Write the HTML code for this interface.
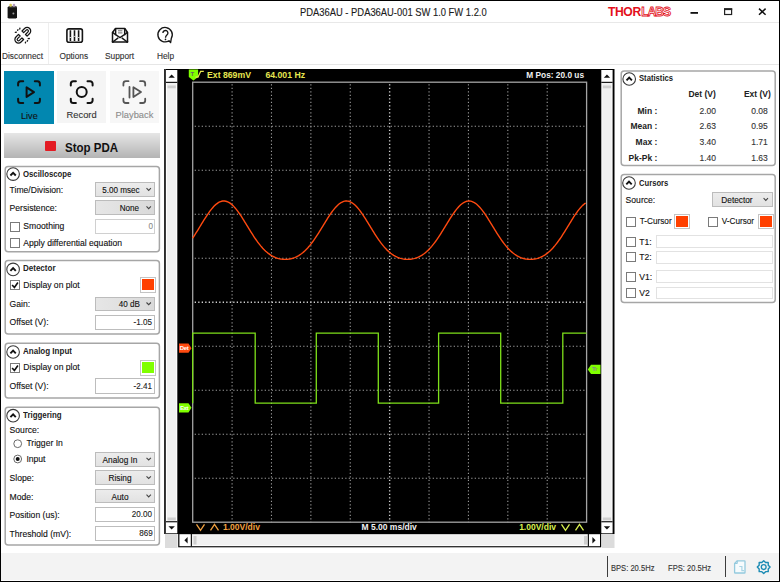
<!DOCTYPE html>
<html><head><meta charset="utf-8">
<style>
*{box-sizing:border-box;margin:0;padding:0}
html,body{width:780px;height:582px;overflow:hidden;background:#fff}
body{position:relative;font-family:"Liberation Sans",sans-serif;color:#222}
.a{position:absolute}
.t{position:absolute;white-space:nowrap;line-height:1}
.t.r{-webkit-text-stroke:0.12px currentColor}
svg{position:absolute;left:0;top:0;overflow:visible}
</style></head><body>
<svg width="780" height="582"><rect x="164" y="69" width="450.5" height="465" fill="#000"/><rect x="166" y="70" width="11.3" height="463.3" fill="#fff"/><rect x="167" y="83" width="9.3" height="438" fill="#f1f1f1"/><rect x="167.5" y="85.5" width="8.3" height="2.8" fill="#cfcfcf"/><rect x="167.5" y="517.5" width="8.3" height="2.8" fill="#cfcfcf"/><rect x="166" y="81.8" width="11.3" height="1.1" fill="#000"/><rect x="166" y="521.2" width="11.3" height="1.1" fill="#000"/><path d="M168.45000000000002 77.8h6.4l-3.2-3.2z" fill="#111"/><path d="M168.45000000000002 526.2h6.4l-3.2 3.2z" fill="#111"/><rect x="601.3" y="70" width="11.3" height="463.3" fill="#fff"/><rect x="602.3" y="83" width="9.3" height="438" fill="#f1f1f1"/><rect x="602.8" y="85.5" width="8.3" height="2.8" fill="#cfcfcf"/><rect x="602.8" y="517.5" width="8.3" height="2.8" fill="#cfcfcf"/><rect x="601.3" y="81.8" width="11.3" height="1.1" fill="#000"/><rect x="601.3" y="521.2" width="11.3" height="1.1" fill="#000"/><path d="M603.7499999999999 77.8h6.4l-3.2-3.2z" fill="#111"/><path d="M603.7499999999999 526.2h6.4l-3.2 3.2z" fill="#111"/><rect x="164.4" y="69" width="1.4" height="465" fill="#4a4a4a"/><rect x="165" y="534" width="12.5" height="14" fill="#dcdcdc"/><rect x="602" y="534" width="12.5" height="14" fill="#dcdcdc"/><rect x="178.2" y="533" width="423" height="14.3" fill="#000"/><rect x="179.4" y="534.2" width="420.6" height="12" fill="#fff"/><rect x="192" y="535.2" width="396" height="10" fill="#f1f1f1"/><rect x="193.5" y="536" width="3" height="8.5" fill="#cfcfcf"/><rect x="584" y="536" width="3" height="8.5" fill="#cfcfcf"/><rect x="190.8" y="534" width="1.1" height="12.3" fill="#000"/><rect x="587.8" y="534" width="1.1" height="12.3" fill="#000"/><path d="M187.6 537v6.4l-3.2-3.2z" fill="#111"/><path d="M592.4 537v6.4l3.2-3.2z" fill="#111"/><line x1="232.09" y1="84.2" x2="232.09" y2="522.2" stroke="#9a9a9a" stroke-width="1.1" stroke-dasharray="1.3 2.2"/><line x1="271.48" y1="84.2" x2="271.48" y2="522.2" stroke="#9a9a9a" stroke-width="1.1" stroke-dasharray="1.3 2.2"/><line x1="310.87" y1="84.2" x2="310.87" y2="522.2" stroke="#9a9a9a" stroke-width="1.1" stroke-dasharray="1.3 2.2"/><line x1="350.26" y1="84.2" x2="350.26" y2="522.2" stroke="#9a9a9a" stroke-width="1.1" stroke-dasharray="1.3 2.2"/><line x1="389.65" y1="84.2" x2="389.65" y2="522.2" stroke="#d0d0d0" stroke-width="1.4" stroke-dasharray="1.3 2.2"/><line x1="429.04" y1="84.2" x2="429.04" y2="522.2" stroke="#9a9a9a" stroke-width="1.1" stroke-dasharray="1.3 2.2"/><line x1="468.43" y1="84.2" x2="468.43" y2="522.2" stroke="#9a9a9a" stroke-width="1.1" stroke-dasharray="1.3 2.2"/><line x1="507.82" y1="84.2" x2="507.82" y2="522.2" stroke="#9a9a9a" stroke-width="1.1" stroke-dasharray="1.3 2.2"/><line x1="547.21" y1="84.2" x2="547.21" y2="522.2" stroke="#9a9a9a" stroke-width="1.1" stroke-dasharray="1.3 2.2"/><line x1="194.7" y1="126.20" x2="586.6" y2="126.20" stroke="#9a9a9a" stroke-width="1.1" stroke-dasharray="1.3 2.2"/><line x1="194.7" y1="170.20" x2="586.6" y2="170.20" stroke="#9a9a9a" stroke-width="1.1" stroke-dasharray="1.3 2.2"/><line x1="194.7" y1="214.20" x2="586.6" y2="214.20" stroke="#9a9a9a" stroke-width="1.1" stroke-dasharray="1.3 2.2"/><line x1="194.7" y1="258.20" x2="586.6" y2="258.20" stroke="#9a9a9a" stroke-width="1.1" stroke-dasharray="1.3 2.2"/><line x1="194.7" y1="302.20" x2="586.6" y2="302.20" stroke="#d0d0d0" stroke-width="1.4" stroke-dasharray="1.3 2.2"/><line x1="194.7" y1="346.20" x2="586.6" y2="346.20" stroke="#9a9a9a" stroke-width="1.1" stroke-dasharray="1.3 2.2"/><line x1="194.7" y1="390.20" x2="586.6" y2="390.20" stroke="#9a9a9a" stroke-width="1.1" stroke-dasharray="1.3 2.2"/><line x1="194.7" y1="434.20" x2="586.6" y2="434.20" stroke="#9a9a9a" stroke-width="1.1" stroke-dasharray="1.3 2.2"/><line x1="194.7" y1="478.20" x2="586.6" y2="478.20" stroke="#9a9a9a" stroke-width="1.1" stroke-dasharray="1.3 2.2"/><rect x="192.7" y="82.2" width="393.90000000000003" height="440.00000000000006" fill="none" stroke="#a4a4a4" stroke-width="1.3"/><polyline points="192.7,238.07 193.7,236.57 194.7,235.04 195.7,233.47 196.7,231.88 197.7,230.27 198.7,228.64 199.7,227.00 200.7,225.36 201.7,223.71 202.7,222.08 203.7,220.46 204.7,218.87 205.7,217.30 206.7,215.76 207.7,214.27 208.7,212.83 209.7,211.45 210.7,210.12 211.7,208.87 212.7,207.69 213.7,206.59 214.7,205.57 215.7,204.65 216.7,203.82 217.7,203.10 218.7,202.47 219.7,201.96 220.7,201.55 221.7,201.25 222.7,201.07 223.7,201.00 224.7,201.05 225.7,201.21 226.7,201.48 227.7,201.87 228.7,202.36 229.7,202.96 230.7,203.67 231.7,204.48 232.7,205.38 233.7,206.38 234.7,207.46 235.7,208.63 236.7,209.87 237.7,211.18 238.7,212.55 239.7,213.98 240.7,215.46 241.7,216.99 242.7,218.55 243.7,220.14 244.7,221.76 245.7,223.39 246.7,225.03 247.7,226.67 248.7,228.31 249.7,229.94 250.7,231.56 251.7,233.16 252.7,234.73 253.7,236.27 254.7,237.77 255.7,239.24 256.7,240.66 257.7,242.04 258.7,243.37 259.7,244.65 260.7,245.88 261.7,247.05 262.7,248.17 263.7,249.23 264.7,250.23 265.7,251.18 266.7,252.07 267.7,252.90 268.7,253.68 269.7,254.40 270.7,255.06 271.7,255.68 272.7,256.24 273.7,256.75 274.7,257.21 275.7,257.62 276.7,257.99 277.7,258.31 278.7,258.59 279.7,258.83 280.7,259.02 281.7,259.17 282.7,259.29 283.7,259.36 284.7,259.40 285.7,259.39 286.7,259.35 287.7,259.27 288.7,259.15 289.7,258.99 290.7,258.78 291.7,258.54 292.7,258.25 293.7,257.92 294.7,257.54 295.7,257.12 296.7,256.65 297.7,256.13 298.7,255.56 299.7,254.93 300.7,254.26 301.7,253.52 302.7,252.74 303.7,251.89 304.7,250.99 305.7,250.04 306.7,249.02 307.7,247.95 308.7,246.82 309.7,245.64 310.7,244.40 311.7,243.11 312.7,241.77 313.7,240.38 314.7,238.95 315.7,237.47 316.7,235.96 317.7,234.42 318.7,232.84 319.7,231.24 320.7,229.62 321.7,227.98 322.7,226.34 323.7,224.70 324.7,223.06 325.7,221.43 326.7,219.82 327.7,218.23 328.7,216.68 329.7,215.16 330.7,213.69 331.7,212.27 332.7,210.91 333.7,209.61 334.7,208.39 335.7,207.24 336.7,206.17 337.7,205.19 338.7,204.31 339.7,203.52 340.7,202.83 341.7,202.25 342.7,201.78 343.7,201.42 344.7,201.17 345.7,201.03 346.7,201.01 347.7,201.10 348.7,201.30 349.7,201.62 350.7,202.05 351.7,202.59 352.7,203.23 353.7,203.98 354.7,204.83 355.7,205.77 356.7,206.80 357.7,207.92 358.7,209.11 359.7,210.38 360.7,211.72 361.7,213.12 362.7,214.57 363.7,216.07 364.7,217.61 365.7,219.18 366.7,220.78 367.7,222.41 368.7,224.04 369.7,225.68 370.7,227.33 371.7,228.97 372.7,230.59 373.7,232.20 374.7,233.79 375.7,235.35 376.7,236.87 377.7,238.36 378.7,239.81 379.7,241.22 380.7,242.58 381.7,243.89 382.7,245.15 383.7,246.36 384.7,247.51 385.7,248.60 386.7,249.64 387.7,250.62 388.7,251.54 389.7,252.41 390.7,253.22 391.7,253.97 392.7,254.67 393.7,255.31 394.7,255.91 395.7,256.45 396.7,256.94 397.7,257.38 398.7,257.77 399.7,258.12 400.7,258.43 401.7,258.69 402.7,258.91 403.7,259.09 404.7,259.22 405.7,259.32 406.7,259.38 407.7,259.40 408.7,259.38 409.7,259.32 410.7,259.22 411.7,259.09 412.7,258.91 413.7,258.69 414.7,258.43 415.7,258.12 416.7,257.77 417.7,257.38 418.7,256.94 419.7,256.45 420.7,255.91 421.7,255.31 422.7,254.67 423.7,253.97 424.7,253.22 425.7,252.41 426.7,251.54 427.7,250.62 428.7,249.64 429.7,248.60 430.7,247.51 431.7,246.36 432.7,245.15 433.7,243.89 434.7,242.58 435.7,241.22 436.7,239.81 437.7,238.36 438.7,236.87 439.7,235.35 440.7,233.79 441.7,232.20 442.7,230.59 443.7,228.97 444.7,227.33 445.7,225.68 446.7,224.04 447.7,222.41 448.7,220.78 449.7,219.18 450.7,217.61 451.7,216.07 452.7,214.57 453.7,213.12 454.7,211.72 455.7,210.38 456.7,209.11 457.7,207.92 458.7,206.80 459.7,205.77 460.7,204.83 461.7,203.98 462.7,203.23 463.7,202.59 464.7,202.05 465.7,201.62 466.7,201.30 467.7,201.10 468.7,201.01 469.7,201.03 470.7,201.17 471.7,201.42 472.7,201.78 473.7,202.25 474.7,202.83 475.7,203.52 476.7,204.31 477.7,205.19 478.7,206.17 479.7,207.24 480.7,208.39 481.7,209.61 482.7,210.91 483.7,212.27 484.7,213.69 485.7,215.16 486.7,216.68 487.7,218.23 488.7,219.82 489.7,221.43 490.7,223.06 491.7,224.70 492.7,226.34 493.7,227.98 494.7,229.62 495.7,231.24 496.7,232.84 497.7,234.42 498.7,235.96 499.7,237.47 500.7,238.95 501.7,240.38 502.7,241.77 503.7,243.11 504.7,244.40 505.7,245.64 506.7,246.82 507.7,247.95 508.7,249.02 509.7,250.04 510.7,250.99 511.7,251.89 512.7,252.74 513.7,253.52 514.7,254.26 515.7,254.93 516.7,255.56 517.7,256.13 518.7,256.65 519.7,257.12 520.7,257.54 521.7,257.92 522.7,258.25 523.7,258.54 524.7,258.78 525.7,258.99 526.7,259.15 527.7,259.27 528.7,259.35 529.7,259.39 530.7,259.40 531.7,259.36 532.7,259.29 533.7,259.17 534.7,259.02 535.7,258.83 536.7,258.59 537.7,258.31 538.7,257.99 539.7,257.62 540.7,257.21 541.7,256.75 542.7,256.24 543.7,255.68 544.7,255.06 545.7,254.40 546.7,253.68 547.7,252.90 548.7,252.07 549.7,251.18 550.7,250.23 551.7,249.23 552.7,248.17 553.7,247.05 554.7,245.88 555.7,244.65 556.7,243.37 557.7,242.04 558.7,240.66 559.7,239.24 560.7,237.77 561.7,236.27 562.7,234.73 563.7,233.16 564.7,231.56 565.7,229.94 566.7,228.31 567.7,226.67 568.7,225.03 569.7,223.39 570.7,221.76 571.7,220.14 572.7,218.55 573.7,216.99 574.7,215.46 575.7,213.98 576.7,212.55 577.7,211.18 578.7,209.87 579.7,208.63 580.7,207.46 581.7,206.38 582.7,205.38 583.7,204.48 584.7,203.67 585.7,202.96" fill="none" stroke="#ff4a10" stroke-width="1.4"/><path d="M192.7 403.2 V333.1 H255.2 V403.2 H316.3 V333.1 H378.3 V403.2 H438.6 V333.1 H500.7 V403.2 H562.8 V333.1 H586.6" fill="none" stroke="#7ee01a" stroke-width="1.3"/><path d="M179 343.6h9.5l3 4.6-3 4.6h-9.5z" fill="#ff4a10"/><path d="M179 403.2h9.5l3 4.6-3 4.6h-9.5z" fill="#80ff00"/><path d="M600.5 364.8h-9.5l-3.2 4.6 3.2 4.6h9.5z" fill="#80ff00"/><path d="M188.8 69.5h9.3v7.5l-4.65 3.5-4.65-3.5z" fill="#80ff00"/><path d="M195.5 77.2h2.5l2.6-5.8h3.2" fill="none" stroke="#e8e850" stroke-width="1.2"/><path d="M196.5 524.3l4 6 4-6M210.5 530.3l4-6 4 6" fill="none" stroke="#f0a040" stroke-width="1.3"/><path d="M561.5 524.3l4 6 4-6M575.5 530.3l4-6 4 6" fill="none" stroke="#d8f050" stroke-width="1.3"/></svg>
<div class="a" style="left:1px;top:22px;width:778px;height:1px;background:#e8e8e8"></div>
<div class="t r" style="left:300.00px;top:7.57px;font-size:10.2px;font-weight:400;color:#1a1a1a;transform:scaleX(0.921);transform-origin:left top;">PDA36AU - PDA36AU-001 SW 1.0 FW 1.2.0</div>
<div class="t" style="left:608.00px;top:5.97px;font-size:12.2px;font-weight:700;color:#e3101c;letter-spacing:-0.45px;">THOR</div>
<div class="t" style="left:641.20px;top:5.97px;font-size:12.2px;font-weight:700;color:#fff;letter-spacing:-1.1px;-webkit-text-stroke:0.8px #e3101c;">LABS</div>
<div class="a" style="left:1px;top:64px;width:778px;height:1px;background:#e6e6e6"></div>
<div class="a" style="left:48px;top:23px;width:1px;height:41px;background:#eeeeee"></div>
<div class="t r" style="left:2.00px;top:51.97px;font-size:8.3px;font-weight:400;color:#333;">Disconnect</div>
<div class="t r" style="left:59.50px;top:51.97px;font-size:8.3px;font-weight:400;color:#333;">Options</div>
<div class="t r" style="left:105.00px;top:51.97px;font-size:8.3px;font-weight:400;color:#333;">Support</div>
<div class="t r" style="left:157.00px;top:51.97px;font-size:8.3px;font-weight:400;color:#333;">Help</div>
<div class="a" style="left:4px;top:71px;width:50px;height:53px;background:#0287b0"></div>
<div class="a" style="left:57px;top:71px;width:49px;height:52px;background:#f5f5f5"></div>
<div class="a" style="left:110px;top:71px;width:49px;height:52px;background:#f7f7f7"></div>
<div class="t r" style="left:20.80px;top:110.97px;font-size:9.6px;font-weight:400;color:#111;transform:scaleX(0.95);transform-origin:left top;">Live</div>
<div class="t r" style="left:66.60px;top:111.23px;font-size:9.3px;font-weight:400;color:#333;">Record</div>
<div class="t r" style="left:115.60px;top:111.23px;font-size:9.3px;font-weight:400;color:#8c8c8c;">Playback</div>
<div class="a" style="left:4px;top:133px;width:156px;height:25px;background:linear-gradient(#e6e6e6,#b4b4b4)"></div>
<div class="a" style="left:45px;top:141px;width:11px;height:10px;background:#e31b23;border-radius:1px"></div>
<div class="t" style="left:64.90px;top:141.94px;font-size:12px;font-weight:700;color:#111;transform:scaleX(0.96);transform-origin:left top;">Stop PDA</div>
<div class="t" style="left:22.50px;top:169.88px;font-size:9px;font-weight:700;color:#222;transform:scaleX(0.863);transform-origin:left top;">Oscilloscope</div>
<div class="t r" style="left:9.60px;top:186.02px;font-size:8.6px;font-weight:400;color:#111;">Time/Division:</div>
<div class="a" style="left:95.2px;top:182.4px;width:60.3px;height:14.400000000000006px;background:linear-gradient(#ececec,#e2e2e2);border:1px solid #bcbcbc"></div>
<div class="t r" style="right:640.50px;top:186.05px;font-size:8.8px;font-weight:400;color:#111;transform:scaleX(0.92);transform-origin:right top;">5.00 msec</div>
<div class="t r" style="left:9.60px;top:204.12px;font-size:8.6px;font-weight:400;color:#111;">Persistence:</div>
<div class="a" style="left:95.2px;top:200.4px;width:60.3px;height:14.799999999999983px;background:linear-gradient(90deg,#e6e6e6,#dadada);border:1px solid #bcbcbc"></div>
<div class="t r" style="right:640.50px;top:204.25px;font-size:8.8px;font-weight:400;color:#111;transform:scaleX(0.92);transform-origin:right top;">None</div>
<div class="t r" style="left:23.30px;top:221.72px;font-size:8.6px;font-weight:400;color:#111;">Smoothing</div>
<div class="a" style="left:95.2px;top:218.8px;width:60.3px;height:14.899999999999977px;background:#fff;border:1px solid #d0d0d0"></div>
<div class="t r" style="right:627.50px;top:221.90px;font-size:8.8px;font-weight:400;color:#8a8a8a;transform:scaleX(0.92);transform-origin:right top;">0</div>
<div class="t r" style="left:23.30px;top:238.62px;font-size:8.6px;font-weight:400;color:#111;">Apply differential equation</div>
<div class="t" style="left:22.50px;top:264.28px;font-size:9px;font-weight:700;color:#222;transform:scaleX(0.89);transform-origin:left top;">Detector</div>
<div class="t r" style="left:23.30px;top:280.72px;font-size:8.6px;font-weight:400;color:#111;">Display on plot</div>
<div class="a" style="left:139.8px;top:277px;width:15.8px;height:15.5px;background:#fff;border:1px solid #c4c4c4"></div>
<div class="a" style="left:141.8px;top:279.3px;width:11.8px;height:11px;background:#ff4000"></div>
<div class="t r" style="left:9.60px;top:299.82px;font-size:8.6px;font-weight:400;color:#111;">Gain:</div>
<div class="a" style="left:95.2px;top:296.5px;width:60.3px;height:14.800000000000011px;background:linear-gradient(90deg,#e6e6e6,#dadada);border:1px solid #bcbcbc"></div>
<div class="t r" style="right:640.50px;top:300.35px;font-size:8.8px;font-weight:400;color:#111;transform:scaleX(0.92);transform-origin:right top;">40 dB</div>
<div class="t r" style="left:9.60px;top:318.42px;font-size:8.6px;font-weight:400;color:#111;">Offset (V):</div>
<div class="a" style="left:95.2px;top:314.5px;width:60.3px;height:15.300000000000011px;background:#fff;border:1px solid #bdbdbd"></div>
<div class="t r" style="right:627.50px;top:317.80px;font-size:8.8px;font-weight:400;color:#222;transform:scaleX(0.92);transform-origin:right top;">-1.05</div>
<div class="t" style="left:22.50px;top:346.78px;font-size:9px;font-weight:700;color:#222;transform:scaleX(0.89);transform-origin:left top;">Analog Input</div>
<div class="t r" style="left:23.30px;top:363.22px;font-size:8.6px;font-weight:400;color:#111;">Display on plot</div>
<div class="a" style="left:139.8px;top:360px;width:15.8px;height:15.5px;background:#fff;border:1px solid #c4c4c4"></div>
<div class="a" style="left:141.8px;top:362.3px;width:11.8px;height:11px;background:#80ff00"></div>
<div class="t r" style="left:9.60px;top:382.32px;font-size:8.6px;font-weight:400;color:#111;">Offset (V):</div>
<div class="a" style="left:95.2px;top:378.4px;width:60.3px;height:15.200000000000045px;background:#fff;border:1px solid #bdbdbd"></div>
<div class="t r" style="right:627.50px;top:381.65px;font-size:8.8px;font-weight:400;color:#222;transform:scaleX(0.92);transform-origin:right top;">-2.41</div>
<div class="t" style="left:22.50px;top:410.58px;font-size:9px;font-weight:700;color:#222;transform:scaleX(0.875);transform-origin:left top;">Triggering</div>
<div class="t r" style="left:9.60px;top:425.52px;font-size:8.6px;font-weight:400;color:#111;">Source:</div>
<div class="t r" style="left:26.40px;top:438.92px;font-size:8.6px;font-weight:400;color:#111;">Trigger In</div>
<div class="t r" style="left:26.40px;top:454.52px;font-size:8.6px;font-weight:400;color:#111;">Input</div>
<div class="a" style="left:95.2px;top:451.8px;width:60.3px;height:14.800000000000011px;background:linear-gradient(#ececec,#e2e2e2);border:1px solid #bcbcbc"></div>
<div class="t r" style="left:20.35px;width:200px;text-align:center;top:455.65px;font-size:8.8px;font-weight:400;color:#111;transform:scaleX(0.94)">Analog In</div>
<div class="t r" style="left:9.60px;top:474.22px;font-size:8.6px;font-weight:400;color:#111;">Slope:</div>
<div class="a" style="left:95.2px;top:470.3px;width:60.3px;height:14.800000000000011px;background:linear-gradient(#ececec,#e2e2e2);border:1px solid #bcbcbc"></div>
<div class="t r" style="left:20.35px;width:200px;text-align:center;top:474.15px;font-size:8.8px;font-weight:400;color:#111;transform:scaleX(0.94)">Rising</div>
<div class="t r" style="left:9.60px;top:492.62px;font-size:8.6px;font-weight:400;color:#111;">Mode:</div>
<div class="a" style="left:95.2px;top:488.7px;width:60.3px;height:14.800000000000011px;background:linear-gradient(#ececec,#e2e2e2);border:1px solid #bcbcbc"></div>
<div class="t r" style="left:20.35px;width:200px;text-align:center;top:492.55px;font-size:8.8px;font-weight:400;color:#111;transform:scaleX(0.94)">Auto</div>
<div class="t r" style="left:9.60px;top:510.62px;font-size:8.6px;font-weight:400;color:#111;">Position (us):</div>
<div class="a" style="left:95.2px;top:507.3px;width:60.3px;height:14.800000000000011px;background:#fff;border:1px solid #bdbdbd"></div>
<div class="t r" style="right:627.50px;top:510.35px;font-size:8.8px;font-weight:400;color:#222;transform:scaleX(0.92);transform-origin:right top;">20.00</div>
<div class="t r" style="left:9.60px;top:529.62px;font-size:8.6px;font-weight:400;color:#111;">Threshold (mV):</div>
<div class="a" style="left:95.2px;top:525.9px;width:60.3px;height:14.800000000000068px;background:#fff;border:1px solid #bdbdbd"></div>
<div class="t r" style="right:627.50px;top:528.95px;font-size:8.8px;font-weight:400;color:#222;transform:scaleX(0.92);transform-origin:right top;">869</div>
<div class="t" style="left:638.80px;top:73.98px;font-size:9px;font-weight:700;color:#222;transform:scaleX(0.85);transform-origin:left top;">Statistics</div>
<div class="t" style="right:64.20px;top:89.80px;font-size:8.5px;font-weight:700;color:#222;">Det (V)</div>
<div class="t" style="right:9.20px;top:89.80px;font-size:8.5px;font-weight:700;color:#222;">Ext (V)</div>
<div class="t" style="right:122.70px;top:106.70px;font-size:8.5px;font-weight:700;color:#222;">Min :</div>
<div class="t r" style="right:64.00px;top:106.70px;font-size:8.5px;font-weight:400;color:#333;">2.00</div>
<div class="t r" style="right:12.30px;top:106.70px;font-size:8.5px;font-weight:400;color:#333;">0.08</div>
<div class="t" style="right:122.70px;top:122.40px;font-size:8.5px;font-weight:700;color:#222;">Mean :</div>
<div class="t r" style="right:64.00px;top:122.40px;font-size:8.5px;font-weight:400;color:#333;">2.63</div>
<div class="t r" style="right:12.30px;top:122.40px;font-size:8.5px;font-weight:400;color:#333;">0.95</div>
<div class="t" style="right:122.70px;top:138.10px;font-size:8.5px;font-weight:700;color:#222;">Max :</div>
<div class="t r" style="right:64.00px;top:138.10px;font-size:8.5px;font-weight:400;color:#333;">3.40</div>
<div class="t r" style="right:12.30px;top:138.10px;font-size:8.5px;font-weight:400;color:#333;">1.71</div>
<div class="t" style="right:122.70px;top:153.80px;font-size:8.5px;font-weight:700;color:#222;">Pk-Pk :</div>
<div class="t r" style="right:64.00px;top:153.80px;font-size:8.5px;font-weight:400;color:#333;">1.40</div>
<div class="t r" style="right:12.30px;top:153.80px;font-size:8.5px;font-weight:400;color:#333;">1.63</div>
<div class="t" style="left:638.70px;top:178.68px;font-size:9px;font-weight:700;color:#222;transform:scaleX(0.85);transform-origin:left top;">Cursors</div>
<div class="t r" style="left:625.60px;top:195.52px;font-size:8.6px;font-weight:400;color:#111;">Source:</div>
<div class="a" style="left:712.3px;top:192.2px;width:60.30000000000007px;height:14.800000000000011px;background:linear-gradient(#ececec,#e2e2e2);border:1px solid #bcbcbc"></div>
<div class="t r" style="left:637.00px;width:200px;text-align:center;top:196.05px;font-size:8.8px;font-weight:400;color:#111;transform:scaleX(0.94)">Detector</div>
<div class="t r" style="left:639.80px;top:217.86px;font-size:8.2px;font-weight:400;color:#111;">T-Cursor</div>
<div class="a" style="left:674.2px;top:213.5px;width:15.8px;height:15.5px;background:#fff;border:1px solid #c4c4c4"></div>
<div class="a" style="left:676.2px;top:215.8px;width:11.8px;height:11px;background:#ff4000"></div>
<div class="t r" style="left:721.80px;top:217.86px;font-size:8.2px;font-weight:400;color:#111;">V-Cursor</div>
<div class="a" style="left:757.8px;top:213.5px;width:15.8px;height:15.5px;background:#fff;border:1px solid #c4c4c4"></div>
<div class="a" style="left:759.8px;top:215.8px;width:11.8px;height:11px;background:#ff4000"></div>
<div class="t r" style="left:639.30px;top:238.12px;font-size:8.6px;font-weight:400;color:#111;">T1:</div>
<div class="a" style="left:655.6px;top:235.4px;width:117px;height:13.099999999999994px;background:#fff;border:1px solid #e2e2e2"></div>
<div class="t r" style="left:639.30px;top:253.42px;font-size:8.6px;font-weight:400;color:#111;">T2:</div>
<div class="a" style="left:655.6px;top:251.3px;width:117px;height:12.699999999999989px;background:#fff;border:1px solid #e2e2e2"></div>
<div class="t r" style="left:639.30px;top:272.62px;font-size:8.6px;font-weight:400;color:#111;">V1:</div>
<div class="a" style="left:655.6px;top:270.3px;width:117px;height:12.699999999999989px;background:#fff;border:1px solid #e2e2e2"></div>
<div class="t r" style="left:639.30px;top:288.92px;font-size:8.6px;font-weight:400;color:#111;">V2</div>
<div class="a" style="left:655.6px;top:287.2px;width:117px;height:11.699999999999989px;background:#fff;border:1px solid #e2e2e2"></div>
<div class="a" style="left:1px;top:553px;width:778px;height:27px;background:#f3f3f3"></div>
<div class="a" style="left:607px;top:556px;width:1px;height:21px;background:#3c3c3c"></div>
<div class="a" style="left:725px;top:556px;width:1px;height:21px;background:#3c3c3c"></div>
<div class="t r" style="left:611.30px;top:563.67px;font-size:8.9px;font-weight:400;color:#333;transform:scaleX(0.855);transform-origin:left top;">BPS: 20.5Hz</div>
<div class="t r" style="left:667.80px;top:563.67px;font-size:8.9px;font-weight:400;color:#333;transform:scaleX(0.855);transform-origin:left top;">FPS: 20.5Hz</div>
<svg width="780" height="582"><g><path d="M7.6 7.6l1.2-1.4h7.6l0.6 1.2v10.2l-1 0.8H8.6l-1-0.8z" fill="#151515"/><path d="M8.8 6.2h7.6l-0.8 1.2H9.4z" fill="#555"/><rect x="9.4" y="3.8" width="2.5" height="3" rx="1.1" fill="#d8c850"/><rect x="12.7" y="3.8" width="2.5" height="3" rx="1.1" fill="#b8a0c0"/><circle cx="13.4" cy="13.4" r="1" fill="#999"/></g><rect x="690.5" y="12" width="7.5" height="1.8" fill="#111"/><rect x="724.6" y="8.9" width="7" height="5.6" fill="none" stroke="#222" stroke-width="1.2"/><rect x="724" y="8.3" width="8.2" height="1.8" fill="#222"/><path d="M759 8.6l6.6 6.2M765.6 8.6l-6.6 6.2" stroke="#111" stroke-width="1.5"/><g fill="none" stroke="#151515" stroke-width="1.25" stroke-linejoin="round"><path transform="translate(26.4 31.7) rotate(45)" d="M-3.6 2.6V-1A3.6 3.6 0 0 1 3.6 -1V2.6H1.3V-1A1.3 1.3 0 0 0 -1.3 -1V2.6Z"/><path transform="translate(19.2 38.8) rotate(225)" d="M-3.6 2.6V-1A3.6 3.6 0 0 1 3.6 -1V2.6H1.3V-1A1.3 1.3 0 0 0 -1.3 -1V2.6Z"/></g><g stroke="#151515" stroke-width="1.3" stroke-linecap="round"><path d="M15.3 32.4l1.1-0.3M17.6 30.3l0.4-0.6M19.8 29l0.1-0.8M29.3 38.5l-1.1 0.2M27.6 40.6l-0.4 0.6M25.5 42.1l-0.1 0.7"/></g><g fill="none" stroke="#151515" stroke-width="1.6"><rect x="66.9" y="28.9" width="15.5" height="13.3" rx="2"/></g><g stroke="#151515" stroke-width="1.6"><path d="M70.4 30.2v10.8M74.5 30.2v10.8M78.6 30.2v10.8"/></g><g stroke="#c8c8c8" stroke-width="1"><path d="M69.2 37.5h2.4M73.3 36.4h2.4M77.4 37.5h2.4"/></g><g fill="none" stroke="#151515" stroke-width="1.5" stroke-linejoin="round"><path d="M112.5 42.1V32.5L115.5 28.4H124.8L127.5 32.5V42.1Z"/><path d="M115.6 28.4V35.2M124.7 28.4V35.2"/><path d="M112.5 32.5L120 37.6 127.5 32.5"/><path d="M112.7 42L118.2 37.8M127.3 42L121.8 37.8"/></g><g fill="#151515"><circle cx="112.8" cy="41.8" r="1.1"/><circle cx="127.2" cy="41.8" r="1.1"/><circle cx="112.8" cy="32.6" r="0.9"/><circle cx="127.2" cy="32.6" r="0.9"/></g><g stroke="#6a6a6a" stroke-width="1"><path d="M118 30.8h4.4M118 32.9h4.4"/></g><g fill="none" stroke="#151515" stroke-width="1.35" stroke-linejoin="round"><path d="M169 40.7A7.2 7.2 0 1 1 171.3 38.3L170.6 42.6Z"/><path d="M162.9 32.9a2.5 2.5 0 1 1 4.2 1.9c-0.9 0.8-1.6 1.4-1.6 2.9"/></g><circle cx="165.5" cy="39.4" r="0.85" fill="#151515"/><g fill="none" stroke="#111" stroke-width="2" stroke-linecap="round"><path d="M18.1 85.49999999999999v-1.8a2.5 2.5 0 0 1 2.5-2.5h2.6M34.8 81.19999999999999h2.6a2.5 2.5 0 0 1 2.5 2.5v1.8M39.9 98.7v1.8a2.5 2.5 0 0 1-2.5 2.5h-2.6M23.200000000000003 103.0h-2.6a2.5 2.5 0 0 1-2.5-2.5v-1.8"/></g><path d="M26.6 87.3v9.6l7.4-4.8z" fill="none" stroke="#111" stroke-width="2" stroke-linejoin="round"/><g fill="none" stroke="#111" stroke-width="2" stroke-linecap="round"><path d="M70.8 85.49999999999999v-1.8a2.5 2.5 0 0 1 2.5-2.5h2.6M87.50000000000001 81.19999999999999h2.6a2.5 2.5 0 0 1 2.5 2.5v1.8M92.60000000000001 98.7v1.8a2.5 2.5 0 0 1-2.5 2.5h-2.6M75.89999999999999 103.0h-2.6a2.5 2.5 0 0 1-2.5-2.5v-1.8"/></g><circle cx="81.7" cy="92.1" r="5" fill="none" stroke="#111" stroke-width="2"/><g fill="none" stroke="#555" stroke-width="1.8" stroke-linecap="round"><path d="M123.4 85.49999999999999v-1.8a2.5 2.5 0 0 1 2.5-2.5h2.6M140.10000000000002 81.19999999999999h2.6a2.5 2.5 0 0 1 2.5 2.5v1.8M145.20000000000002 98.7v1.8a2.5 2.5 0 0 1-2.5 2.5h-2.6M128.5 103.0h-2.6a2.5 2.5 0 0 1-2.5-2.5v-1.8"/></g><path d="M129.5 87v10.6" fill="none" stroke="#555" stroke-width="1.8" stroke-linecap="round"/><path d="M133.4 87.2v9.8l7.6-4.9z" fill="none" stroke="#555" stroke-width="1.8" stroke-linejoin="round"/><rect x="5.2" y="166.6" width="154.20000000000002" height="85.1" rx="3" fill="none" stroke="#a6a6a6" stroke-width="1.5"/><circle cx="13.1" cy="174.1" r="6.3" fill="none" stroke="#3a3a3a" stroke-width="1.1"/><path d="M10.399999999999999 175.5l2.7-2.7 2.7 2.7" fill="none" stroke="#111" stroke-width="1.9"/><path d="M146.5 188.20000000000002l2.2 2.2 2.2-2.2" fill="none" stroke="#444" stroke-width="1.1"/><path d="M146.5 206.4l2.2 2.2 2.2-2.2" fill="none" stroke="#444" stroke-width="1.1"/><rect x="10.5" y="222.5" width="9" height="9" fill="#fff" stroke="#7a7a7a" stroke-width="1"/><rect x="10.5" y="238.5" width="9" height="9" fill="#fff" stroke="#7a7a7a" stroke-width="1"/><rect x="5.2" y="260.4" width="154.20000000000002" height="73.6" rx="3" fill="none" stroke="#a6a6a6" stroke-width="1.5"/><circle cx="13.1" cy="269.4" r="6.3" fill="none" stroke="#3a3a3a" stroke-width="1.1"/><path d="M10.399999999999999 270.79999999999995l2.7-2.7 2.7 2.7" fill="none" stroke="#111" stroke-width="1.9"/><rect x="10.5" y="280.5" width="9" height="9" fill="#fff" stroke="#7a7a7a" stroke-width="1"/><path d="M12.1 285l2.3 2.4 3.5-4.9" fill="none" stroke="#111" stroke-width="1.6"/><path d="M146.5 302.5l2.2 2.2 2.2-2.2" fill="none" stroke="#444" stroke-width="1.1"/><rect x="5.2" y="343.2" width="154.20000000000002" height="54.8" rx="3" fill="none" stroke="#a6a6a6" stroke-width="1.5"/><circle cx="13.1" cy="352" r="6.3" fill="none" stroke="#3a3a3a" stroke-width="1.1"/><path d="M10.399999999999999 353.4l2.7-2.7 2.7 2.7" fill="none" stroke="#111" stroke-width="1.9"/><rect x="10.5" y="363.5" width="9" height="9" fill="#fff" stroke="#7a7a7a" stroke-width="1"/><path d="M12.1 368l2.3 2.4 3.5-4.9" fill="none" stroke="#111" stroke-width="1.6"/><rect x="5.2" y="407.2" width="154.20000000000002" height="137.8" rx="3" fill="none" stroke="#a6a6a6" stroke-width="1.5"/><circle cx="13.1" cy="415.7" r="6.3" fill="none" stroke="#3a3a3a" stroke-width="1.1"/><path d="M10.399999999999999 417.09999999999997l2.7-2.7 2.7 2.7" fill="none" stroke="#111" stroke-width="1.9"/><circle cx="17.7" cy="443.7" r="3.9" fill="#fff" stroke="#6a6a6a" stroke-width="1"/><circle cx="17.7" cy="459" r="3.9" fill="#fff" stroke="#6a6a6a" stroke-width="1"/><circle cx="17.7" cy="459" r="2" fill="#111"/><path d="M146.5 457.80000000000007l2.2 2.2 2.2-2.2" fill="none" stroke="#444" stroke-width="1.1"/><path d="M146.5 476.30000000000007l2.2 2.2 2.2-2.2" fill="none" stroke="#444" stroke-width="1.1"/><path d="M146.5 494.70000000000005l2.2 2.2 2.2-2.2" fill="none" stroke="#444" stroke-width="1.1"/><rect x="621.2" y="70.9" width="154.0" height="94.6" rx="3" fill="none" stroke="#a6a6a6" stroke-width="1.5"/><circle cx="629.2" cy="79" r="6.3" fill="none" stroke="#3a3a3a" stroke-width="1.1"/><path d="M626.5 80.4l2.7-2.7 2.7 2.7" fill="none" stroke="#111" stroke-width="1.9"/><rect x="621.2" y="174.4" width="154.0" height="128.1" rx="3" fill="none" stroke="#a6a6a6" stroke-width="1.5"/><circle cx="629" cy="183" r="6.3" fill="none" stroke="#3a3a3a" stroke-width="1.1"/><path d="M626.3 184.4l2.7-2.7 2.7 2.7" fill="none" stroke="#111" stroke-width="1.9"/><path d="M763.6 198.2l2.2 2.2 2.2-2.2" fill="none" stroke="#444" stroke-width="1.1"/><rect x="626.5" y="217.5" width="9" height="9" fill="#fff" stroke="#7a7a7a" stroke-width="1"/><rect x="708.5" y="217.5" width="9" height="9" fill="#fff" stroke="#7a7a7a" stroke-width="1"/><rect x="626.5" y="237.5" width="9" height="9" fill="#fff" stroke="#7a7a7a" stroke-width="1"/><rect x="626.5" y="252.5" width="9" height="9" fill="#fff" stroke="#7a7a7a" stroke-width="1"/><rect x="626.5" y="272.5" width="9" height="9" fill="#fff" stroke="#7a7a7a" stroke-width="1"/><rect x="626.5" y="288.5" width="9" height="9" fill="#fff" stroke="#7a7a7a" stroke-width="1"/><path d="M737.3 560.8H744.4Q745 560.8 745 561.4V572.4Q745 573 744.4 573H735.2Q734.6 573 734.6 572.4V563.5Z" fill="#f6fbfd" stroke="#94cade" stroke-width="1.3" stroke-linejoin="round"/><path d="M737.3 560.8V563.5H734.6" fill="none" stroke="#94cade" stroke-width="1"/><path d="M739.3 566.5h2.6v4.2h2.2" fill="none" stroke="#a8d4e4" stroke-width="1.2"/><path d="M763.70,560.70L765.58,562.57L768.23,562.57L768.23,565.22L770.10,567.10L768.23,568.98L768.23,571.63L765.58,571.63L763.70,573.50L761.82,571.63L759.17,571.63L759.17,568.98L757.30,567.10L759.17,565.22L759.17,562.57L761.82,562.57z" fill="none" stroke="#1b8bb4" stroke-width="1.4" stroke-linejoin="round"/><circle cx="763.7" cy="567.1" r="2.4" fill="none" stroke="#1b8bb4" stroke-width="1.3"/></svg>
<div class="t" style="left:207.00px;top:70.54px;font-size:8.7px;font-weight:700;color:#e6e650;">Ext 869mV</div>
<div class="t" style="left:265.40px;top:70.54px;font-size:8.7px;font-weight:700;color:#e6e650;">64.001 Hz</div>
<div class="t" style="right:196.00px;top:70.87px;font-size:8.3px;font-weight:700;color:#f0f0f0;">M Pos: 20.0 us</div>
<div class="t" style="left:223.00px;top:523.40px;font-size:8.5px;font-weight:700;color:#f0a040;">1.00V/div</div>
<div class="t" style="left:361.50px;top:523.40px;font-size:8.5px;font-weight:700;color:#f0f0f0;">M 5.00 ms/div</div>
<div class="t" style="right:224.00px;top:523.40px;font-size:8.5px;font-weight:700;color:#d8f050;">1.00V/div</div>
<div class="t" style="left:179.8px;top:345.2px;font-size:6px;font-weight:700;color:#fff;letter-spacing:-0.4px">Det</div>
<div class="t" style="left:180px;top:404.8px;font-size:6px;font-weight:700;color:#fff;letter-spacing:-0.4px">Ext</div>
<div class="t" style="left:592px;top:366.4px;font-size:6px;font-weight:700;color:#888;letter-spacing:-0.4px">Tr</div>
<div class="t" style="left:190.5px;top:71px;font-size:6px;font-weight:700;color:#666">T</div>
<div class="a" style="left:0;top:0;width:780px;height:582px;border-top:1px solid #000;border-left:1px solid #000;border-right:1px solid #000;border-bottom:1px solid #000"></div>
</body></html>
